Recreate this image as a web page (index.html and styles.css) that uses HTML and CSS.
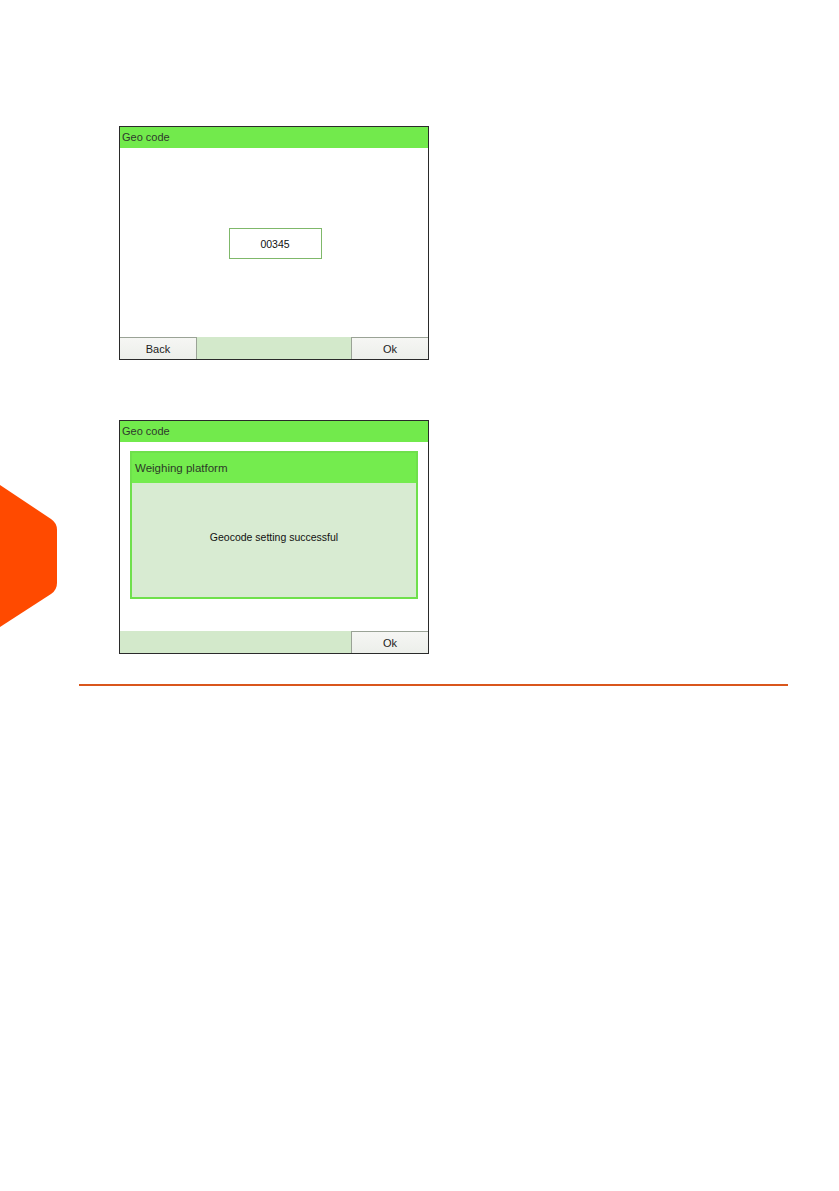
FILE: index.html
```html
<!DOCTYPE html>
<html>
<head>
<meta charset="utf-8">
<link rel="stylesheet" href="styles.css">
</head>
<body>
<div class="page">
  <div class="shots">
    <div class="screen">
      <div class="titlebar">Geo code</div>
      <div class="screen-body center">
        <div class="field">00345</div>
      </div>
      <div class="bottombar">
        <div class="btn btn-back">Back</div>
        <div class="btn btn-ok">Ok</div>
      </div>
    </div>
    <div class="screen">
      <div class="titlebar">Geo code</div>
      <div class="screen-body pad">
        <div class="dialog">
          <div class="dialog-head">Weighing platform</div>
          <div class="dialog-body">Geocode setting successful</div>
        </div>
      </div>
      <div class="bottombar">
        <div class="btn btn-ok">Ok</div>
      </div>
    </div>
  </div>
  <div class="rule"></div>
</div>
<svg class="tab" width="60" height="142" viewBox="0 0 60 142">
  <path d="M0 0 L51 34 Q57 38 57 45 L57 98 Q57 105 51 109 L0 142 Z" fill="#ff4a00"/>
</svg>
</body>
</html>
```
FILE: styles.css
```css
html, body {
  margin: 0;
  padding: 0;
  background: #ffffff;
}
body {
  width: 839px;
  height: 1191px;
  position: relative;
  font-family: "Liberation Sans", Arial, sans-serif;
  color: #1a1a1a;
}
.page {
  padding-top: 126px;
}
.shots {
  display: flex;
  flex-direction: column;
  gap: 60px;
  padding-left: 119px;
}
.screen {
  width: 308px;
  height: 232px;
  border: 1px solid #2a2a2a;
  display: flex;
  flex-direction: column;
  background: #ffffff;
}
.titlebar {
  height: 21px;
  background: #72ea4c;
  font-size: 11px;
  line-height: 21px;
  padding-left: 2px;
  color: #2f3a2c;
}
.screen-body {
  flex: 1;
  display: flex;
}
.screen-body.center {
  align-items: center;
  justify-content: center;
  padding-top: 2px;
}
.screen-body.pad {
  padding: 9px 10px 0 10px;
  align-items: flex-start;
}
.field {
  width: 91px;
  height: 29px;
  border: 1px solid #7fb86a;
  border-width: 1.5px;
  font-size: 10.5px;
  display: flex;
  align-items: center;
  justify-content: center;
  margin-left: 2px;
  color: #111;
}
.bottombar {
  height: 22px;
  background: #d3e9cb;
  display: flex;
  justify-content: space-between;
  align-items: stretch;
}
.btn {
  background: linear-gradient(#f6f6f4, #ecefea);
  border: 1px solid #9aa396;
  border-bottom: none;
  font-size: 11px;
  display: flex;
  align-items: center;
  justify-content: center;
  color: #222;
}
.btn-back {
  width: 76px;
  margin-left: 0;
  border-left: none;
}
.btn-ok {
  width: 76px;
  margin-left: auto;
  border-right: none;
}
.dialog {
  width: 284px;
  height: 144px;
  border: 2px solid #6fe04c;
  display: flex;
  flex-direction: column;
  background: #d8ebd2;
}
.dialog-head {
  height: 30px;
  background: #74ec4e;
  font-size: 11.5px;
  line-height: 30px;
  padding-left: 3px;
  color: #2c3a28;
}
.dialog-body {
  flex: 1;
  display: flex;
  align-items: center;
  justify-content: center;
  font-size: 10.5px;
  color: #111;
  padding-bottom: 6px;
}
.rule {
  margin: 30px 0 0 79px;
  width: 709px;
  height: 2px;
  background: #d9561c;
}
.tab {
  position: absolute;
  left: 0;
  top: 485px;
}
```
